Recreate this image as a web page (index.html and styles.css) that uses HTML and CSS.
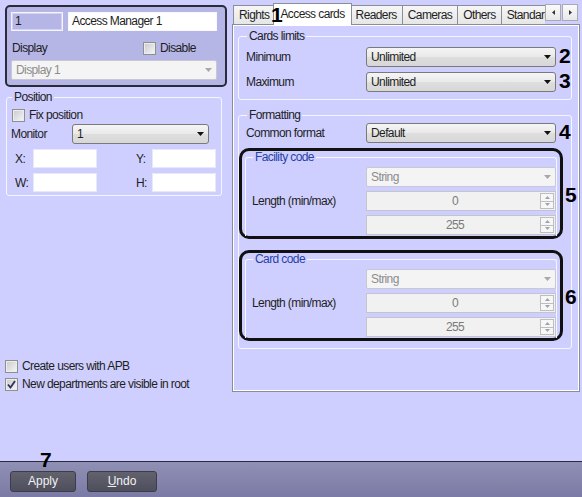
FILE: index.html
```html
<!DOCTYPE html>
<html>
<head>
<meta charset="utf-8">
<link rel="stylesheet" href="styles.css">
</head>
<body>
<div class="app">
  <div class="main">
    <div class="left">
      <div class="idbox">
        <div class="r-id">
          <div class="tb tb-id">1</div>
          <div class="tb tb-name">Access Manager 1</div>
        </div>
        <div class="r-disp">
          <span class="lbl">Display</span>
          <label class="chk"><span class="box"></span>Disable</label>
        </div>
        <div class="combo dis wide"><span>Display 1</span><svg class="arr" width="7" height="4" viewBox="0 0 7 4"><path d="M0 0H7L3.5 4Z"/></svg></div>
      </div>

      <fieldset class="grp pos">
        <legend>Position</legend>
        <label class="chk fix"><span class="box"></span>Fix position</label>
        <div class="mon">
          <span class="lbl">Monitor</span>
          <div class="combo mcombo"><span>1</span><svg class="arr" width="7" height="4" viewBox="0 0 7 4"><path d="M0 0H7L3.5 4Z"/></svg></div>
        </div>
        <div class="xy">
          <span>X:</span><div class="tb"></div><span></span><span>Y:</span><div class="tb"></div>
        </div>
        <div class="xy">
          <span>W:</span><div class="tb"></div><span></span><span>H:</span><div class="tb"></div>
        </div>
      </fieldset>

      <div class="opts">
        <label class="chk"><span class="box"></span>Create users with APB</label>
        <label class="chk"><span class="box"><svg width="11" height="11" viewBox="0 0 11 11"><path d="M2 5.5L4.5 8.5L9 2" fill="none" stroke="#2c3354" stroke-width="1.8"/></svg></span>New departments are visible in root</label>
      </div>
    </div>

    <div class="right">
      <div class="tabbar">
        <div class="tabs">
          <div class="tab">Rights</div>
          <div class="tab active">Access cards</div>
          <div class="tab">Readers</div>
          <div class="tab">Cameras</div>
          <div class="tab">Others</div>
          <div class="tab">Standard</div>
        </div>
        <div class="scroll">
          <span class="sb"><svg width="3" height="5" viewBox="0 0 3 5"><path d="M3 0V5L0 2.5Z"/></svg></span>
          <span class="sb"><svg width="3" height="5" viewBox="0 0 3 5"><path d="M0 0V5L3 2.5Z"/></svg></span>
        </div>
        <span class="ann a1">1</span>
      </div>

      <div class="panel">
        <fieldset class="grp limits">
          <legend>Cards limits</legend>
          <div class="frow">
            <span class="lbl">Minimum</span>
            <div class="combo fcombo"><span>Unlimited</span><svg class="arr" width="7" height="4" viewBox="0 0 7 4"><path d="M0 0H7L3.5 4Z"/></svg></div>
            <span class="ann">2</span>
          </div>
          <div class="frow">
            <span class="lbl">Maximum</span>
            <div class="combo fcombo"><span>Unlimited</span><svg class="arr" width="7" height="4" viewBox="0 0 7 4"><path d="M0 0H7L3.5 4Z"/></svg></div>
            <span class="ann">3</span>
          </div>
        </fieldset>

        <fieldset class="grp fmt">
          <legend>Formatting</legend>
          <div class="frow">
            <span class="lbl">Common format</span>
            <div class="combo fcombo"><span>Default</span><svg class="arr" width="7" height="4" viewBox="0 0 7 4"><path d="M0 0H7L3.5 4Z"/></svg></div>
            <span class="ann">4</span>
          </div>

          <div class="frame">
            <fieldset class="grp sub">
              <legend>Facility code</legend>
              <div class="sgrid">
                <span class="lbl len">Length (min/max)</span>
                <div class="combo dis"><span>String</span><svg class="arr" width="7" height="4" viewBox="0 0 7 4"><path d="M0 0H7L3.5 4Z"/></svg></div>
                <div class="spin"><span class="val">0</span><span class="btns"><span class="sbtn"><svg width="5" height="3" viewBox="0 0 5 3"><path d="M0 3H5L2.5 0Z"/></svg></span><span class="sbtn"><svg width="5" height="3" viewBox="0 0 5 3"><path d="M0 0H5L2.5 3Z"/></svg></span></span></div>
                <div class="spin"><span class="val">255</span><span class="btns"><span class="sbtn"><svg width="5" height="3" viewBox="0 0 5 3"><path d="M0 3H5L2.5 0Z"/></svg></span><span class="sbtn"><svg width="5" height="3" viewBox="0 0 5 3"><path d="M0 0H5L2.5 3Z"/></svg></span></span></div>
              </div>
            </fieldset>
            <span class="ann side">5</span>
          </div>

          <div class="frame card">
            <fieldset class="grp sub">
              <legend>Card code</legend>
              <div class="sgrid">
                <span class="lbl len">Length (min/max)</span>
                <div class="combo dis"><span>String</span><svg class="arr" width="7" height="4" viewBox="0 0 7 4"><path d="M0 0H7L3.5 4Z"/></svg></div>
                <div class="spin"><span class="val">0</span><span class="btns"><span class="sbtn"><svg width="5" height="3" viewBox="0 0 5 3"><path d="M0 3H5L2.5 0Z"/></svg></span><span class="sbtn"><svg width="5" height="3" viewBox="0 0 5 3"><path d="M0 0H5L2.5 3Z"/></svg></span></span></div>
                <div class="spin"><span class="val">255</span><span class="btns"><span class="sbtn"><svg width="5" height="3" viewBox="0 0 5 3"><path d="M0 3H5L2.5 0Z"/></svg></span><span class="sbtn"><svg width="5" height="3" viewBox="0 0 5 3"><path d="M0 0H5L2.5 3Z"/></svg></span></span></div>
              </div>
            </fieldset>
            <span class="ann side">6</span>
          </div>
        </fieldset>
      </div>
    </div>
  </div>

  <div class="footer">
    <button class="btn">Apply</button>
    <button class="btn btn-undo"><u>U</u>ndo</button>
    <span class="ann a7">7</span>
  </div>
</div>
</body>
</html>
```

FILE: styles.css
```css
* { box-sizing: border-box; }
html, body { margin: 0; padding: 0; }
body {
  width: 582px;
  height: 497px;
  overflow: hidden;
  background: #cfcfff;
  font-family: "Liberation Sans", Arial, sans-serif;
  font-size: 12px;
  letter-spacing: -0.6px;
  line-height: 14px;
  color: #1e1e1e;
}
.app { display: flex; flex-direction: column; height: 497px; }
.main { display: flex; height: 461px; }
.left { width: 232px; flex: none; display: flex; flex-direction: column; }
.right { width: 348px; flex: none; display: flex; flex-direction: column; }

/* ---------- generic controls ---------- */
.tb {
  height: 19px;
  background: #fff;
  border: 1px solid #e8e8f6;
  padding-left: 3px;
  line-height: 17px;
  white-space: nowrap;
}
.combo {
  height: 20px;
  display: flex;
  align-items: center;
  justify-content: space-between;
  padding: 0 4px 0 4px;
  border: 1px solid #7a7a7a;
  border-radius: 3px;
  background: linear-gradient(#f5f5f5, #e9e9e9 50%, #dedede 51%, #d7d7d7);
  white-space: nowrap;
}
.combo .arr { fill: #111; flex: none; }
.combo.dis {
  border-color: #c8c8d2;
  border-radius: 2px;
  background: #f4f4f4;
  color: #8c8c8c;
}
.combo.dis .arr { fill: #a8a8a8; }

.chk { display: flex; align-items: center; gap: 4px; height: 14px; white-space: nowrap; }
.box {
  width: 13px; height: 13px; flex: none;
  border: 1px solid #8e8f8f;
  background: linear-gradient(135deg, #c9c9cc, #f7f7f7);
  box-shadow: inset 0 0 0 1px #ececec;
  display: flex; align-items: center; justify-content: center;
}

.grp {
  margin: 0;
  border: 1px solid #f6f6ff;
  border-radius: 3px;
  min-width: 0;
}
.grp legend {
  padding: 0 2px;
  line-height: 14px;
  color: #222;
}

.ann {
  font-family: "Liberation Sans", Arial, sans-serif;
  font-weight: bold;
  font-size: 21px;
  letter-spacing: 0;
  line-height: 20px;
  color: #000;
}

/* ---------- left column ---------- */
.idbox {
  margin: 5px 0 0 5px;
  width: 222px;
  height: 82px;
  border: 2px solid #2a2a38;
  border-radius: 5px;
  background: #b5b5e6;
  padding: 5px 8px 0 4px;
}
.r-id { display: flex; gap: 5px; }
.tb-id {
  width: 52px;
  background: transparent;
  border: 1px solid #f4f4ff;
  box-shadow: inset 0 0 0 1px #d4d4f2;
}
.tb-name { flex: 1; border-color: #f8f8ff; }
.r-disp {
  display: grid;
  grid-template-columns: 131px auto;
  align-items: center;
  height: 16px;
  margin-top: 9px;
  padding-left: 1px;
}
.wide { margin-top: 4px; width: 206px; }

.pos {
  margin: 3px 0 0 6px;
  width: 216px;
  padding: 3px 5px 3px 4px;
}
.pos legend { margin-left: 1px; }
.fix { height: 16px; margin-left: 1px; }
.mon { display: flex; align-items: center; margin-top: 1px; }
.mon .lbl { width: 61px; }
.mcombo { width: 137px; }
.xy {
  display: grid;
  grid-template-columns: 18px 64px 1fr 16px 64px;
  align-items: center;
  margin-top: 5px;
  padding-left: 4px;
}
.xy .tb { height: 19px; }

.opts {
  margin: 163px 0 0 5px;
  display: flex;
  flex-direction: column;
  gap: 4px;
}

/* ---------- tabs ---------- */
.tabbar { height: 25px; display: flex; position: relative; z-index: 2; }
.tabs {
  width: 313px;
  height: 25px;
  overflow: hidden;
  display: flex;
  align-items: flex-end;
  padding-left: 1px;
}
.tab {
  flex: none;
  height: 19px;
  margin-bottom: 1px;
  padding: 0 5px;
  line-height: 19px;
  border: 1px solid #8c8e96;
  border-bottom: 0;
  background: linear-gradient(#f6f6f6, #e6e6e6);
  white-space: nowrap;
}
.tab + .tab { margin-left: -1px; }
.tab.active {
  height: 22px;
  margin: 0 -2px 0 -2px;
  padding: 0 6px;
  line-height: 20px;
  background: #fff;
  position: relative;
  z-index: 2;
}
.tab.active + .tab { margin-left: 0; }
.scroll { display: flex; gap: 1px; margin: 4px 0 0 0; height: 17px; }
.sb {
  width: 16px; height: 17px;
  border: 1px solid #a9a9b3;
  background: linear-gradient(#fafafa, #e8e8e8);
  display: flex; align-items: center; justify-content: center;
}
.sb svg { fill: #333; }
.a1 { position: absolute; left: 39px; top: 5px; z-index: 3; }

/* ---------- panel ---------- */
.panel {
  width: 348px;
  height: 368px;
  margin-top: -1px;
  border: 1px solid #8a8c96;
  box-shadow: inset 1px 1px 0 #fff, inset -1px -1px 0 #fff;
  padding: 0 7px 0 5px;
  position: relative;
  z-index: 1;
}
.limits { margin-top: 4px; padding: 4px 0 7px 7px; }
.limits legend, .fmt legend { margin-left: 1px; }
.frow { display: flex; align-items: center; height: 20px; }
.frow + .frow { margin-top: 5px; }
.frow .lbl { width: 120px; flex: none; }
.fcombo { width: 190px; flex: none; }
.frow .ann { margin-left: 3px; margin-top: -2px; }

.fmt { margin-top: 8px; padding: 1px 0 7px 7px; }
.frame {
  position: relative;
  margin: 5px 0 0 -7px;
  width: 324px;
  border: 3px solid #111;
  border-radius: 10px;
}
.frame.card { margin-top: 11px; }
.sub {
  margin: 0 3px;
  padding: 4px 0 1px 6px;
  border-bottom: 0;
  border-radius: 3px 3px 0 0;
}
.sub legend { line-height: 12px; color: #2741a6; }
.sgrid {
  display: grid;
  grid-template-columns: 114px 190px;
  grid-template-rows: 20px 20px 20px;
  row-gap: 4px;
}
.len { grid-row: 1 / 4; align-self: center; }
.frame .side { position: absolute; left: calc(100% + 5px); top: 34px; }

.spin {
  display: flex;
  height: 20px;
  border: 1px solid #c4c4cc;
  background: #f1f1f1;
  padding: 1px;
}
.val { flex: 1; text-align: center; line-height: 16px; color: #7a7a7a; padding-left: 2px; }
.btns { width: 14px; display: flex; flex-direction: column; gap: 0; }
.sbtn {
  flex: 1;
  border: 1px solid #bdbdc4;
  background: #f7f7f7;
  display: flex; align-items: center; justify-content: center;
}
.sbtn + .sbtn { border-top: 0; }
.sbtn svg { fill: #a2a2a8; }

/* ---------- footer ---------- */
.footer {
  height: 36px;
  border-top: 1px solid #2a2a3a;
  background: linear-gradient(#9090b6, #7a7aa4);
  display: flex;
  align-items: flex-start;
  gap: 11px;
  padding: 9px 0 0 10px;
  position: relative;
}
.btn {
  width: 66px;
  height: 21px;
  padding: 0;
  border: 1px solid #3c3c4a;
  border-radius: 3px;
  background: linear-gradient(#62626f, #4e4e5c);
  color: #f2f2f2;
  font: inherit;
  line-height: 19px;
}
.btn-undo { width: 70px; }
.a7 { position: absolute; left: 40px; top: -12px; }
```
